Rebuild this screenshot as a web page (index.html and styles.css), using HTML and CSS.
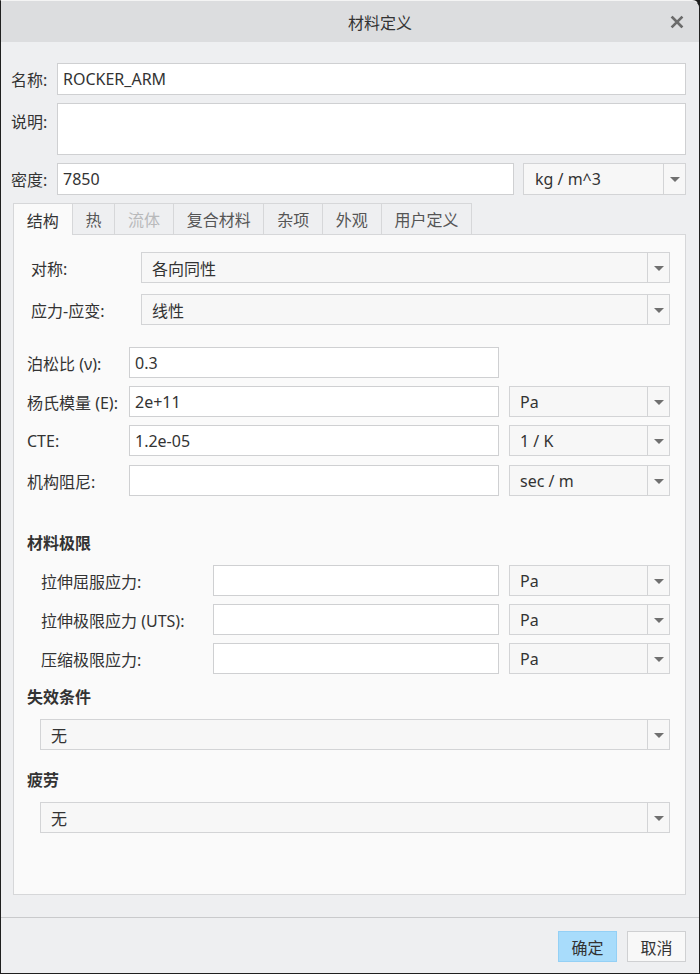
FILE: index.html
```html
<!DOCTYPE html>
<html lang="zh-CN">
<head>
<meta charset="utf-8">
<title>材料定义</title>
<link rel="stylesheet" href="styles.css">
</head>
<body>
<div class="window">
  <div class="titlebar">
    <div class="title">材料定义</div>
    <div class="close">
      <svg width="14" height="14" viewBox="0 0 14 14"><path d="M2.5 2.5 L11.5 11.5 M11.5 2.5 L2.5 11.5" stroke="#6b6b6b" stroke-width="2.6" stroke-linecap="square"/></svg>
    </div>
  </div>

  <div class="content">
    <div class="row top-row">
      <div class="label">名称:</div>
      <div class="input grow">ROCKER_ARM</div>
    </div>
    <div class="row desc-row">
      <div class="label label-top">说明:</div>
      <div class="input grow textarea"></div>
    </div>
    <div class="row top-row">
      <div class="label">密度:</div>
      <div class="input density">7850</div>
      <div class="select density-unit"><span class="sel-text">kg / m^3</span><span class="arrow"></span></div>
    </div>

    <div class="tabs">
      <div class="tab active">结构</div>
      <div class="tab">热</div>
      <div class="tab disabled">流体</div>
      <div class="tab">复合材料</div>
      <div class="tab">杂项</div>
      <div class="tab">外观</div>
      <div class="tab">用户定义</div>
    </div>

    <div class="panel">
      <div class="prow sym-row">
        <div class="plabel sym-label">对称:</div>
        <div class="select grow"><span class="sel-text">各向同性</span><span class="arrow"></span></div>
      </div>
      <div class="prow sym-row second">
        <div class="plabel sym-label">应力-应变:</div>
        <div class="select grow"><span class="sel-text">线性</span><span class="arrow"></span></div>
      </div>

      <div class="prop-group">
        <div class="prow">
          <div class="plabel prop-label">泊松比 (ν):</div>
          <div class="input prop-input">0.3</div>
        </div>
        <div class="prow">
          <div class="plabel prop-label">杨氏模量 (E):</div>
          <div class="input prop-input">2e+11</div>
          <div class="select unit"><span class="sel-text">Pa</span><span class="arrow"></span></div>
        </div>
        <div class="prow">
          <div class="plabel prop-label">CTE:</div>
          <div class="input prop-input">1.2e-05</div>
          <div class="select unit"><span class="sel-text">1 / K</span><span class="arrow"></span></div>
        </div>
        <div class="prow last">
          <div class="plabel prop-label">机构阻尼:</div>
          <div class="input prop-input"></div>
          <div class="select unit"><span class="sel-text">sec / m</span><span class="arrow"></span></div>
        </div>
      </div>

      <div class="heading limits-heading">材料极限</div>
      <div class="limit-group">
        <div class="prow">
          <div class="plabel limit-label">拉伸屈服应力:</div>
          <div class="input limit-input"></div>
          <div class="select unit"><span class="sel-text">Pa</span><span class="arrow"></span></div>
        </div>
        <div class="prow">
          <div class="plabel limit-label">拉伸极限应力 (UTS):</div>
          <div class="input limit-input"></div>
          <div class="select unit"><span class="sel-text">Pa</span><span class="arrow"></span></div>
        </div>
        <div class="prow">
          <div class="plabel limit-label">压缩极限应力:</div>
          <div class="input limit-input"></div>
          <div class="select unit"><span class="sel-text">Pa</span><span class="arrow"></span></div>
        </div>
      </div>

      <div class="heading fail-heading">失效条件</div>
      <div class="select wide-select"><span class="sel-text">无</span><span class="arrow"></span></div>

      <div class="heading fatigue-heading">疲劳</div>
      <div class="select wide-select"><span class="sel-text">无</span><span class="arrow"></span></div>
    </div>
  </div>

  <div class="footer">
    <div class="btn primary">确定</div>
    <div class="btn">取消</div>
  </div>
</div>
</body>
</html>
```

FILE: styles.css
```css
* { box-sizing: border-box; }

html, body {
  margin: 0;
  padding: 0;
  background: #1b1b1b;
}

body {
  font-family: "Noto Sans", "Noto Sans CJK SC", sans-serif;
  font-size: 16px;
  color: #333;
}

.window {
  width: 700px;
  height: 974px;
  border: 1px solid #1f1f1f;
  border-top: 1px solid #f4f4f4;
  border-radius: 0 8px 0 0;
  background: #eeeff1;
  display: flex;
  flex-direction: column;
  overflow: hidden;
}

.titlebar {
  height: 41px;
  background: #dcdddf;
  display: flex;
  align-items: center;
  flex-shrink: 0;
}

.title {
  flex: 1;
  text-align: center;
  padding-left: 100px;
  font-size: 16px;
  color: #333;
}

.close {
  width: 40px;
  display: flex;
  align-items: center;
  justify-content: center;
  padding-right: 4px;
  padding-top: 1px;
}

.content {
  padding: 21px 13px 0 10px;
}

.row {
  display: flex;
  align-items: center;
}

.top-row { height: 32px; }

.desc-row {
  height: 52px;
  margin: 8px 0;
  align-items: flex-start;
}

.label {
  width: 46px;
  flex-shrink: 0;
  color: #333;
  white-space: nowrap;
}

.label-top { padding-top: 6px; }

.grow { flex: 1; }

.input {
  height: 100%;
  background: #ffffff;
  border: 1px solid #cfd0d2;
  display: flex;
  align-items: center;
  padding-left: 5px;
  color: #333;
  white-space: nowrap;
}

.textarea { height: 52px; }

.density { width: 457px; }

.select {
  height: 100%;
  background: #f7f7f7;
  border: 1px solid #d3d4d6;
  display: flex;
  align-items: stretch;
  color: #333;
}

.sel-text {
  flex: 1;
  display: flex;
  align-items: center;
  padding-left: 10px;
  white-space: nowrap;
}

.arrow {
  width: 22px;
  border-left: 1px solid #d3d4d6;
  display: flex;
  align-items: center;
  justify-content: center;
}

.arrow::after {
  content: "";
  width: 0;
  height: 0;
  border-left: 5px solid transparent;
  border-right: 5px solid transparent;
  border-top: 5px solid #707070;
  margin-top: 1px;
}

.density-unit {
  width: 163px;
  margin-left: 9px;
}

.density-unit .sel-text { padding-left: 11px; }

.tabs {
  display: flex;
  align-items: flex-end;
  margin-top: 8px;
  margin-left: 2px;
  height: 31px;
}

.tab {
  height: 31px;
  padding: 0 12.8px;
  border: 1px solid #d6d7d9;
  border-bottom: none;
  margin-right: -1px;
  background: #eeeff1;
  color: #555;
  display: flex;
  align-items: center;
  white-space: nowrap;
}

.tab.active {
  height: 32px;
  margin-bottom: -1px;
  background: #fafafa;
  color: #333;
  position: relative;
  z-index: 1;
}

.tab.disabled { color: #b8b9bb; }

.panel {
  margin-left: 2px;
  height: 661px;
  background: #fafafa;
  border: 1px solid #d6d7d9;
  padding: 17px 15px 0 13px;
  display: flex;
  flex-direction: column;
}

.prow {
  display: flex;
  align-items: center;
  height: 31px;
  flex-shrink: 0;
}

.plabel {
  flex-shrink: 0;
  white-space: nowrap;
  color: #333;
}

.sym-row { margin-left: 4px; }
.sym-row.second { margin-top: 11px; }
.sym-label { width: 110px; }

.prop-group {
  margin-top: 22px;
  display: flex;
  flex-direction: column;
  gap: 8px;
}

.prow.last { margin-top: 1px; }

.prop-label { width: 102px; }
.prop-input { width: 370px; }

.unit {
  width: 161px;
  margin-left: 10px;
}

.heading {
  font-weight: bold;
  line-height: 20px;
  height: 20px;
  color: #333;
  flex-shrink: 0;
}

.limits-heading { margin-top: 37px; }

.limit-group {
  margin-top: 12px;
  display: flex;
  flex-direction: column;
  gap: 8px;
  padding-left: 14px;
}

.limit-label { width: 172px; }
.limit-input { width: 286px; }

.fail-heading { margin-top: 13px; }
.fatigue-heading { margin-top: 20px; }

.wide-select {
  height: 31px;
  margin-top: 12px;
  margin-left: 13px;
  flex-shrink: 0;
}

.footer {
  margin-top: 22px;
  border-top: 1px solid #c9cacc;
  display: flex;
  justify-content: flex-end;
  gap: 10px;
  padding: 13px 13px 0 0;
  flex: 1;
}

.btn {
  width: 59px;
  height: 31px;
  border: 1px solid #cfd0d2;
  background: #f8f8f8;
  display: flex;
  align-items: center;
  justify-content: center;
  color: #333;
}

.btn.primary {
  background: #a8dcfb;
  border-color: #94d0f5;
}
```
